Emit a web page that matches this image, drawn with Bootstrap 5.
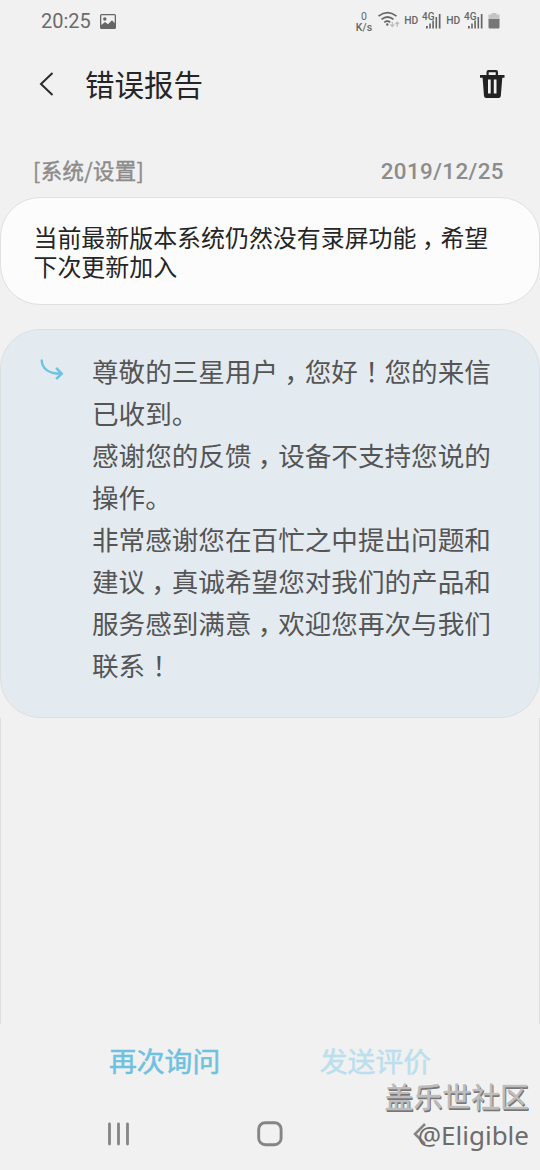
<!DOCTYPE html>
<html lang="zh-CN">
<head>
<meta charset="utf-8">
<meta name="viewport" content="width=device-width, initial-scale=1">
<title>错误报告</title>
<link href="https://cdn.jsdelivr.net/npm/bootstrap@5.3.0/dist/css/bootstrap.min.css" rel="stylesheet">
<style>
body{background:#f1f1f1;font-family:Roboto,"Noto Sans CJK SC",sans-serif;color:#252525;width:540px;height:1170px;overflow:hidden}
svg{display:block;flex:none}
.cn{font-family:"Noto Sans CJK SC",sans-serif}
.status{height:42px;padding:0 39px 0 41px;color:#6c6c6c}
.clock{font-size:20px;line-height:42px;margin-right:9px}
.title-bar{height:84px;padding:0 35px 0 39px}
.title-bar h1{font-size:29.5px;line-height:40px;margin:0 0 2px 30px}
.meta{height:71px;padding:26px 36px 0 33px;color:#8c8c8c}
.topic{font-size:21.4px;line-height:36px;-webkit-text-stroke:.45px;letter-spacing:.4px}
.date{font-size:22.4px;font-weight:500;line-height:39px;letter-spacing:.4px}
.bubble{border:1px solid #dcdfe0;border-radius:40px;--bs-card-bg:#fcfcfc}
.question{height:108px;padding:24px 0 0 32.5px;font-size:23.95px;line-height:29px;color:#252525;border-color:#e0e0e0}
.answer{margin-top:24px;height:389px;padding:20px 0 0 38px;background:#e3ebf1;font-size:26.6px;line-height:42px;color:#555}
.answer svg{margin-top:2px}
.answer p{margin-left:27px}
.comma{margin-left:.23em;letter-spacing:-.23em}
.bang{margin-left:.27em;letter-spacing:-.27em}
.rest{height:306px;border:solid #dfdfdf;border-width:0 1px}
.actions{height:76px;padding:16px 109px 0}
.action{font-size:27.8px;line-height:40px;color:#6fc1e0;border:0;padding:0;-webkit-text-stroke:.5px}
.action:disabled{color:#bbdfec;opacity:1;border:0}
.navi{height:70px;padding:0 108px 2px 107px}
.navi .home{margin-right:3px}
.watermark{right:11px;top:1076px;color:#6c6c6c;text-align:right}
.forum{font-size:28.9px;line-height:39px;color:#bdbdbd;text-shadow:1px 1px 0 #777,1px 2px 0 #777,-1px -1px 0 #fafafa;-webkit-text-stroke:.5px}
.author{font-family:"Noto Sans",sans-serif;font-size:26px;line-height:40px}
</style>
</head>
<body class="d-flex flex-column position-relative">
<header class="status d-flex align-items-center justify-content-between">
  <div class="d-flex align-items-center"><span class="clock">20:25</span>
    <svg width="16" height="15" viewBox="0 0 16 15"><path fill="#666" fill-rule="evenodd" d="M1.500 0h13Q16 0 16 1.500v12Q16 15 14.500 15h-13Q0 15 0 13.500v-12Q0 0 1.500 0ZM1.300 1.300v9.700l3.700-3 3 2.200 4-4 2.700 3V1.300Z"/><circle cx="4.800" cy="5" r="1.700" fill="#666"/></svg>
  </div>
  <svg width="147" height="24" viewBox="354 9 147 24" fill="#666" font-family="Roboto" font-weight="500">
    <text x="364" y="20" font-size="10.500" font-weight="400" text-anchor="middle">0</text><text x="364" y="30.500" font-size="10.500" text-anchor="middle" letter-spacing=".2">K/s</text>
    <g fill="none" stroke="#666" stroke-width="1.700"><path d="M378.500 16.200q9-7 18 0M381.500 19.400q6-4.800 12 0M384.300 22.300q3-2.300 6 0"/></g><circle cx="387.300" cy="24.500" r="1.200"/>
    <path fill="none" stroke="#bbb" stroke-width="1.200" d="M392.300 22v4.500m-1.800-2 1.800 2 1.800-2M397.200 27v-4.800m-1.800 2 1.800-2 1.800 2"/>
    <text x="404.300" y="24" font-size="10.500" textLength="14" lengthAdjust="spacingAndGlyphs">HD</text><text x="446.300" y="24" font-size="10.500" textLength="14" lengthAdjust="spacingAndGlyphs">HD</text>
    <text x="422" y="20" font-size="10" textLength="12.500" lengthAdjust="spacingAndGlyphs">4G</text><text x="464" y="20" font-size="10" textLength="12.500" lengthAdjust="spacingAndGlyphs">4G</text>
    <g id="bars"><path d="M426 26h1.800v2.500H426zM429.200 23.500h1.600v5h-1.600zM432.300 20.500h1.600v8h-1.600zM435.500 17h1.600v11.500h-1.600zM438.800 14h1.700v14.500h-1.700z"/></g><use href="#bars" x="42"/>
    <path fill="#c4c4c4" d="M491.500 13h5v1.500h3V20h-11v-5.500h3z"/><path fill="#777" d="M488.500 19h11v8.500q0 1-1 1h-9q-1 0-1-1z"/>
  </svg>
</header>
<div class="title-bar d-flex align-items-center">
  <svg width="16" height="26" viewBox="0 0 16 26"><path d="M13.500 2 2 13 13.500 24" fill="none" stroke="#2a2a2a" stroke-width="2"/></svg>
  <h1 class="cn fw-normal">错误报告</h1>
  <svg class="ms-auto" width="25" height="30" viewBox="0 0 25 30"><path fill="#222" fill-rule="evenodd" d="M6.500 6V3Q6.500 1 8.500 1h7.500q2 0 2 2v3h6.500v2.700H22.300L20.800 27q-.2 2-2.200 2H6.200q-2 0-2.200-2L2.600 8.700H0V6ZM8.700 6h7V3.300h-7ZM8 10.500v14h2.700v-14Zm5.800 0v14h2.700v-14Z"/></svg>
</div>
<div class="meta d-flex justify-content-between"><span class="topic cn">[系统/设置]</span><span class="date">2019/12/25</span></div>
<main>
  <section class="card bubble question cn">
    <p class="mb-0">当前最新版本系统仍然没有录屏功能<span class="comma">，</span>希望<br>下次更新加入</p>
  </section>
  <section class="card bubble answer cn flex-row align-items-start">
    <svg width="26" height="28" viewBox="0 0 26 28"><path d="M2.700 7.500C2.700 16 9 21.800 22 21.800M17.200 15.800l5.500 6-5.500 5.200" fill="none" stroke="#6cc3e3" stroke-width="2.500"/></svg>
    <p class="mb-0 text-nowrap">尊敬的三星用户<span class="comma">，</span>您好<span class="bang">！</span>您的来信<br>已收到。<br>感谢您的反馈<span class="comma">，</span>设备不支持您说的<br>操作。<br>非常感谢您在百忙之中提出问题和<br>建议<span class="comma">，</span>真诚希望您对我们的产品和<br>服务感到满意<span class="comma">，</span>欢迎您再次与我们<br>联系<span class="bang">！</span></p>
  </section>
  <div class="rest"></div>
</main>
<div class="actions d-flex justify-content-between align-items-start cn">
  <button class="btn action">再次询问</button><button class="btn action" disabled>发送评价</button>
</div>
<nav class="navi d-flex align-items-center justify-content-between">
  <svg width="23" height="24" viewBox="0 0 23 24"><path d="M2.500 2v20M11.500 2v20M20.500 2v20" stroke="#858585" stroke-width="2.800" stroke-linecap="round"/></svg>
  <svg class="home" width="26" height="26" viewBox="0 0 26 26"><rect x="1.700" y="1.700" width="22.400" height="22" rx="6.500" fill="none" stroke="#858585" stroke-width="2.900"/></svg>
  <svg width="20" height="24" viewBox="0 0 20 24"><path d="M13 2 3 12l10 10" fill="none" stroke="#858585" stroke-width="2.500"/></svg>
</nav>
<div class="watermark position-absolute"><div class="forum cn">盖乐世社区</div><div class="author">@Eligible</div></div>
<script src="https://cdn.jsdelivr.net/npm/bootstrap@5.3.0/dist/js/bootstrap.bundle.min.js"></script>
</body>
</html>
